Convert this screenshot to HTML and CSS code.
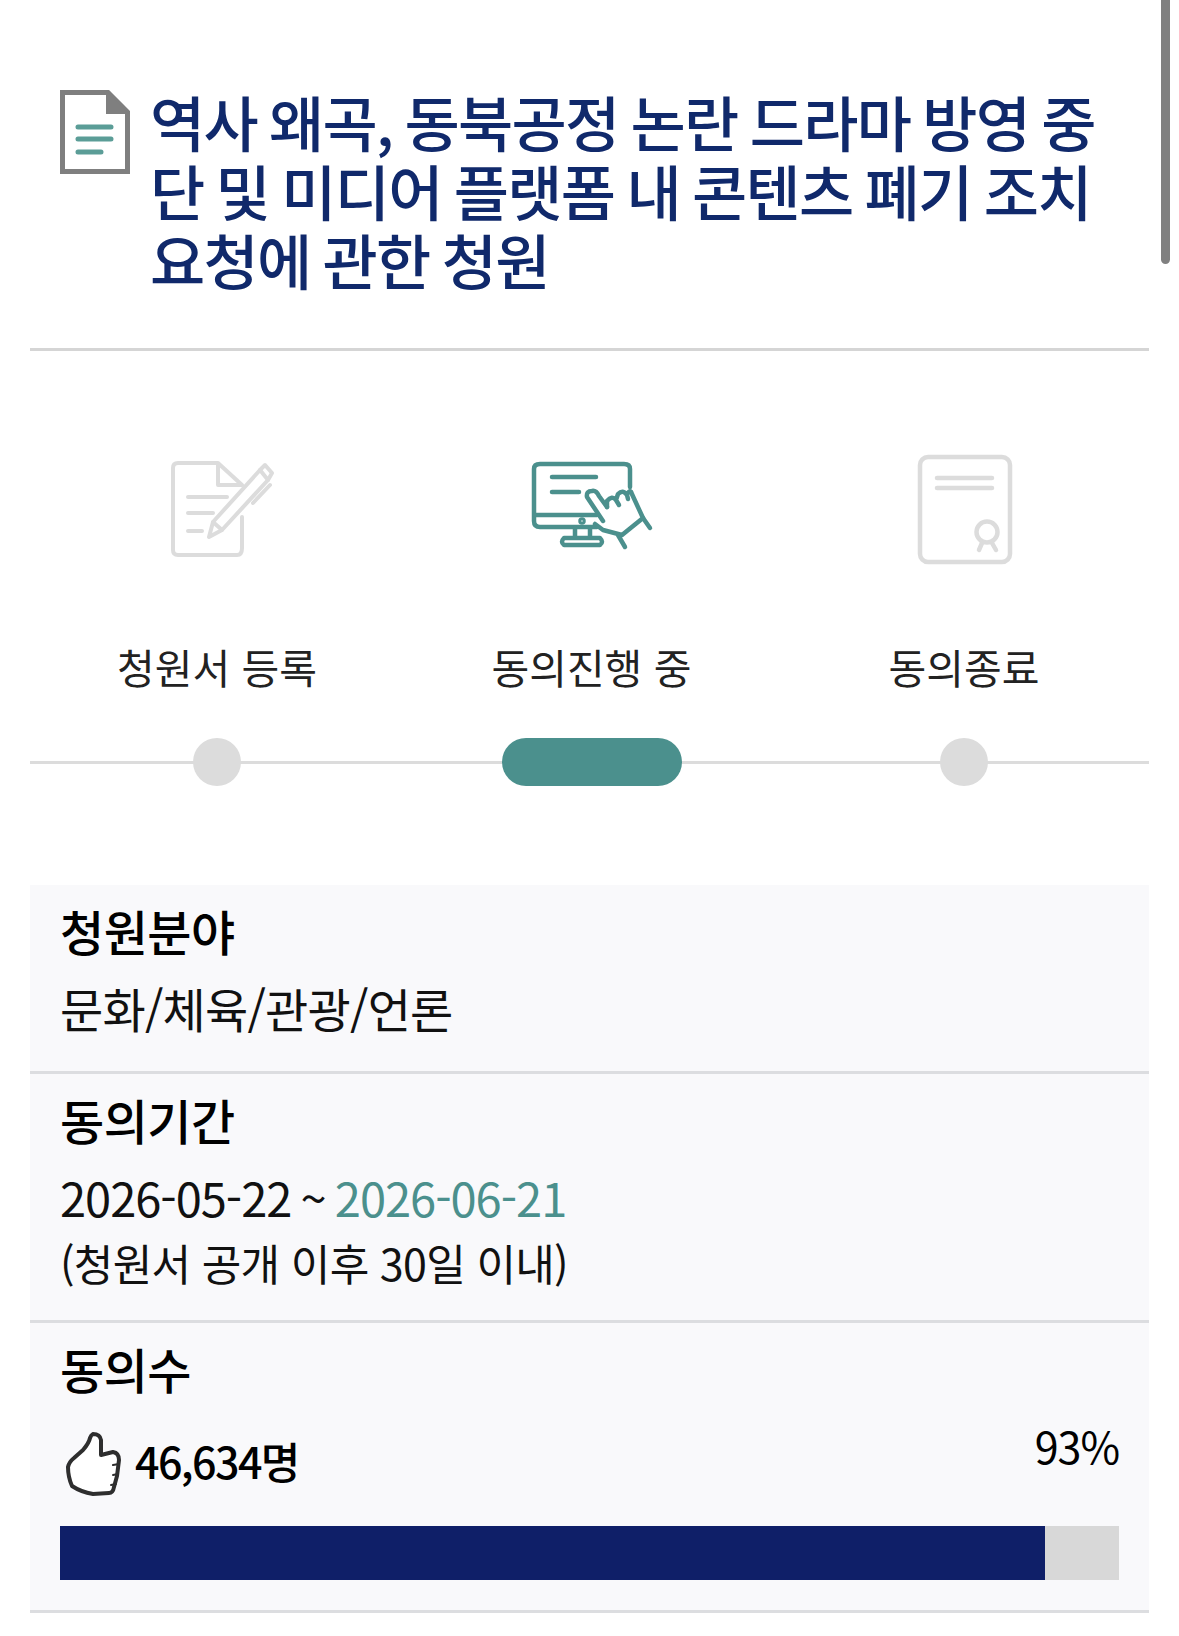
FILE: index.html
```html
<!DOCTYPE html>
<html lang="ko">
<head>
    <meta charset="UTF-8">
    <meta name="viewport" content="width=device-width, initial-scale=1.0">
    <title>청원 상세</title>
    <link rel="stylesheet" href="styles.css">
</head>
<body>
    <div class="scrollbar"></div>
    <main class="page">
        <header class="title-box">
            <svg class="doc-icon" width="70" height="84" viewBox="0 0 70 84">
                <path d="M2.500 2.500H48L67.500 22V81.500H2.500Z" fill="#fff" stroke="#7f7f7f" stroke-width="5"/>
                <path d="M46 1V24H69Z" fill="#7f7f7f"/>
                <path d="M18 37H51M18 49H51M18 62H41" fill="none" stroke="#5b9d97" stroke-width="5" stroke-linecap="round"/>
            </svg>
            <h1 class="title">역사 왜곡, 동북공정 논란 드라마 방영 중단 및 미디어 플랫폼 내 콘텐츠 폐기 조치 요청에 관한 청원</h1>
        </header>

        <section class="steps">
            <div class="step">
                <svg class="step-icon" width="140" height="115" viewBox="-3 10 140 115" fill="none" stroke="#dcdcdc" stroke-width="4" stroke-linecap="round" stroke-linejoin="round">
                    <path d="M92 77V108Q92 115 87 115H28Q23 115 23 110V28Q23 23 28 23H68L92 45H68V23"/>
                    <path d="M38 57H77M38 73H63M38 91H52"/>
                    <path d="M59 97L63 82L110 30L118 40L72 90Z"/>
                    <path d="M110 30L115 25L122 33L118 40M63 82L72 90M120 45L103 63"/>
                </svg>
                <span class="step-name">청원서 등록</span>
            </div>
            <div class="step">
                <svg class="step-icon" width="150" height="115" viewBox="2 5 150 115" fill="none" stroke="#4b908d" stroke-width="4.500" stroke-linecap="round" stroke-linejoin="round">
                    <path d="M82 82H25Q19 82 19 76V24Q19 19 25 19H109Q115 19 115 24V42"/>
                    <path d="M20 70H82M37 32H81M37 47H64"/>
                    <circle cx="67" cy="76" r="1.500"/>
                    <path d="M60 83V93M75 83V93M49 93H85Q89 97 85 100H49Q45 97 49 93Z"/>
                    <path d="M92 62L84 51Q81 45 77 46Q71 46 72 52L88 76M80 79L88 85L107 90L128 73L116 47"/>
                    <path d="M92 62L92 56Q97 50 101 55L104 60M101 55L103 49Q108 44 112 50L113 54M112 50Q114 45 116 47"/>
                    <path d="M128 73L135 83M103 90L110 102"/>
                </svg>
                <span class="step-name">동의진행 중</span>
            </div>
            <div class="step">
                <svg class="step-icon" width="120" height="115" viewBox="4 10 120 115" fill="none" stroke="#dcdcdc" stroke-width="4.500" stroke-linecap="round" stroke-linejoin="round">
                    <rect x="20" y="17" width="90" height="105" rx="8"/>
                    <path d="M37 38H92M37 48H92"/>
                    <circle cx="87" cy="92" r="10.500"/>
                    <path d="M82 103L79 110M92 103L96 110"/>
                </svg>
                <span class="step-name">동의종료</span>
            </div>
        </section>

        <div class="track">
            <div class="track-cell"><span class="dot"></span></div>
            <div class="track-cell"><span class="pill"></span></div>
            <div class="track-cell"><span class="dot"></span></div>
        </div>

        <section class="info">
            <div class="info-row row-field">
                <div class="info-label">청원분야</div>
                <div class="info-value">문화/체육/관광/언론</div>
            </div>
            <div class="info-row row-period">
                <div class="info-label">동의기간</div>
                <div class="info-value">2026-05-22 ~ <span class="end-date">2026-06-21</span></div>
                <div class="info-note">(청원서 공개 이후 30일 이내)</div>
            </div>
            <div class="info-row row-count">
                <div class="info-label">동의수</div>
                <div class="count-line">
                    <div class="count">
                        <svg class="thumb" width="56" height="66" viewBox="0 0 56 66" fill="#fff" stroke="#2e2e2e" stroke-width="4" stroke-linejoin="round" stroke-linecap="round">
                            <path d="M27 3Q34 3 35 9V24L47 21Q53 22 53 29L51 45L48 56Q47 62 43 62L27 63Q15 61 6 55Q2 46 2 36Q3 31 8 27L17 19Q23 12 24 7Q25 4 27 3Z"/>
                            <path d="M53 33L47 34M52 43L47 44M50 53L45 54" stroke-width="2"/>
                        </svg>
                        <span>46,634명</span>
                    </div>
                    <span class="percent">93%</span>
                </div>
                <div class="bar"><div class="bar-fill" style="width: 93%"></div></div>
            </div>
        </section>
    </main>
</body>
</html>
```

FILE: styles.css
```css
* {
    box-sizing: border-box;
}

html, body {
    margin: 0;
    padding: 0;
    height: 1636px;
    overflow: hidden;
}

body {
    background-color: #fff;
    color: #000;
    font-family: "Noto Sans CJK KR", "Noto Sans", sans-serif;
}

.scrollbar {
    position: absolute;
    top: 0;
    left: 1161px;
    width: 9px;
    height: 264px;
    background-color: #808080;
    border-radius: 0 0 5px 5px;
}

.page {
    padding: 0 30px;
}

/* 제목 */
.title-box {
    display: flex;
    align-items: flex-start;
    height: 351px;
    padding: 90px 0 0 30px;
    border-bottom: 3px solid #d5d5d5;
}

.doc-icon {
    flex: none;
}

.title {
    margin: -4px 0 0 20px;
    width: 960px;
    color: #10296b;
    font-size: 60px;
    font-weight: 500;
    line-height: 69px;
    letter-spacing: -1.7px;
    word-spacing: -3px;
}

/* 진행 단계 */
.steps {
    display: grid;
    grid-template-columns: 374px 375px 370px;
    padding-top: 99px;
}

.step {
    display: flex;
    flex-direction: column;
    align-items: center;
}

.step-icon {
    display: block;
}

.step-name {
    margin-top: 71px;
    color: #222;
    font-size: 41px;
    line-height: 60px;
}

.track {
    display: grid;
    grid-template-columns: 374px 375px 370px;
    height: 48px;
    margin-top: 42px;
    background: linear-gradient(#dcdcdc, #dcdcdc) center / 100% 3px no-repeat;
}

.track-cell {
    display: flex;
    justify-content: center;
}

.dot {
    width: 48px;
    height: 48px;
    border-radius: 50%;
    background-color: #dcdcdc;
}

.pill {
    width: 180px;
    height: 48px;
    border-radius: 24px;
    background-color: #4b908d;
}

/* 청원 정보 */
.info {
    margin-top: 99px;
    background-color: #f9f9fb;
}

.info-row {
    padding: 12px 30px 0;
    border-bottom: 3px solid #dcdde0;
}

.row-field {
    height: 189px;
}

.row-period {
    height: 249px;
}

.row-count {
    height: 290px;
}

.info-label {
    font-size: 48px;
    font-weight: 500;
    line-height: 66px;
    letter-spacing: -0.5px;
}

.info-value {
    margin-top: 12px;
    font-size: 47px;
    line-height: 66px;
    letter-spacing: -0.8px;
    word-spacing: -3px;
    color: #111;
}

.row-period .info-value {
    letter-spacing: -1px;
}

.end-date {
    color: #4b908d;
}

.info-note {
    margin-top: 3px;
    font-size: 43px;
    line-height: 58px;
    letter-spacing: -0.7px;
    color: #111;
}

.count-line {
    display: flex;
    justify-content: space-between;
    align-items: flex-start;
    margin-top: 21px;
}

.count {
    display: flex;
    align-items: center;
    gap: 13px;
    height: 66px;
    margin-top: 5px;
    margin-left: 6px;
    font-size: 43px;
    font-weight: 500;
    line-height: 66px;
    letter-spacing: -1.6px;
}

.thumb {
    margin-top: 8px;
}

.percent {
    font-size: 43px;
    line-height: 46px;
    letter-spacing: -1px;
}

.bar {
    height: 54px;
    margin-top: 33px;
    background-color: #d8d8d8;
}

.bar-fill {
    height: 100%;
    background-color: #0f1f68;
}
```
